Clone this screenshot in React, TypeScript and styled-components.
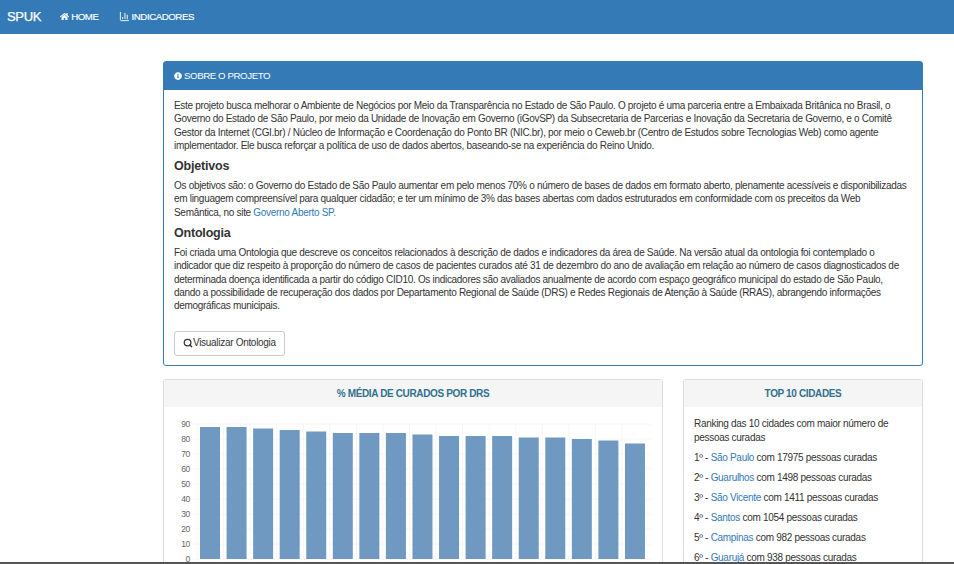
import React from 'react';
import styled, { createGlobalStyle } from 'styled-components';
import { BarChart3, Search } from 'lucide-react';
import { FaHome, FaInfoCircle } from 'react-icons/fa';

const GlobalStyle = createGlobalStyle`
  html, body {
    margin: 0;
    height: 564px;
    overflow: hidden;
    background: #fff;
    font-family: "Liberation Sans", Arial, sans-serif;
    font-size: 10px;
    letter-spacing: -0.3px;
    line-height: 13.3px;
    color: #333;
  }
  a { color: #337ab7; text-decoration: none; }
`;

const Navbar = styled.nav`
  height: 34px;
  background: #337ab7;
  display: flex;
  align-items: center;
  padding-left: 7px;
  color: #fff;
`;

const Brand = styled.div`
  font-size: 13px;
  letter-spacing: -0.3px;
  -webkit-text-stroke: 0.25px #fff;
  margin-right: 19px;
`;

const NavLink = styled.div`
  display: flex;
  align-items: center;
  gap: 2px;
  font-size: 9.7px;
  letter-spacing: -0.44px;
  -webkit-text-stroke: 0.15px #fff;
  margin-right: 20px;
`;

const Main = styled.main`
  padding: 27px 31px 0 163px;
`;

const Panel = styled.section`
  border: 1px solid #337ab7;
  border-radius: 3px;
  height: 305px;
  box-sizing: border-box;
`;

const PanelHeading = styled.div`
  background: #337ab7;
  color: #fff;
  height: 28px;
  display: flex;
  align-items: center;
  gap: 2px;
  padding-left: 10px;
  font-size: 9.7px;
  letter-spacing: -0.42px;
`;

const PanelBody = styled.div`
  padding: 9px 13px 10px 10px;
`;

const Paragraph = styled.p`
  margin: 0;
`;

const Subtitle = styled.h3`
  margin: 7px 0 6px;
  font-size: 12.5px;
  line-height: 14px;
  font-weight: 700;
  letter-spacing: -0.2px;
`;

const Button = styled.button`
  display: flex;
  align-items: center;
  gap: 0;
  margin-top: 18px;
  height: 25px;
  padding: 0 8px;
  background: #fff;
  border: 1px solid #ccc;
  border-radius: 3px;
  color: #333;
  font: inherit;
  letter-spacing: inherit;
`;

const Row = styled.div`
  display: grid;
  grid-template-columns: 500px 240px;
  gap: 20px;
  margin-top: 13px;
`;

const Card = styled.section`
  border: 1px solid #ddd;
  border-radius: 3px;
  height: 300px;
  box-sizing: border-box;
`;

const CardHeading = styled.div`
  height: 27px;
  background: #f5f5f5;
  display: flex;
  align-items: center;
  justify-content: center;
  font-weight: 700;
  font-size: 10px;
  letter-spacing: -0.36px;
  color: #31708f;
`;

const ChartBody = styled.div`
  padding-top: 10px;
`;

const RankingBody = styled.div`
  padding: 10.4px 10px;
`;

const RankingItem = styled.p`
  margin: 0 0 6.7px;
`;

const BottomEdge = styled.div`
  position: fixed;
  left: 0;
  right: 0;
  bottom: 0;
  height: 2px;
  background: #555;
`;

const values = [88, 88, 87, 86, 85, 84, 84, 84, 83, 82, 82, 82, 81, 81, 80, 79, 77];
const ticks = [0, 10, 20, 30, 40, 50, 60, 70, 80, 90];
const ranking = [
  ['1º', 'São Paulo', 17975],
  ['2º', 'Guarulhos', 1498],
  ['3º', 'São Vicente', 1411],
  ['4º', 'Santos', 1054],
  ['5º', 'Campinas', 982],
  ['6º', 'Guarujá', 938],
];

const Chart: React.FC = () => {
  const y0 = 142;
  return (
    <svg width="498" height="160" style={{ display: 'block' }}>
      {ticks.map((t) => (
        <g key={t}>
          <line x1="29" x2="487" y1={y0 - t * 1.5} y2={y0 - t * 1.5} stroke="#f6f6f6" />
          <text x="26" y={y0 - t * 1.5 + 3} textAnchor="end" fontSize="8.5" fill="#666">{t}</text>
        </g>
      ))}
      {values.map((v, i) => (
        <line key={i} x1={33 + i * 26.56} x2={33 + i * 26.56} y1={y0 - 135} y2={y0 + 2} stroke="#f6f6f6" />
      ))}
      {values.map((v, i) => (
        <rect key={i} x={36 + i * 26.56} y={y0 - v * 1.5} width="20" height={v * 1.5} fill="#7099c2" />
      ))}
    </svg>
  );
};

const App: React.FC = () => (
  <>
    <GlobalStyle />
    <Navbar>
      <Brand>SPUK</Brand>
      <NavLink><FaHome size={9} />HOME</NavLink>
      <NavLink><BarChart3 size={11} />INDICADORES</NavLink>
    </Navbar>
    <Main>
      <Panel>
        <PanelHeading><FaInfoCircle size={8} />SOBRE O PROJETO</PanelHeading>
        <PanelBody>
          <Paragraph>
            Este projeto busca melhorar o Ambiente de Negócios por Meio da Transparência no Estado de São Paulo. O projeto é uma parceria entre a Embaixada Britânica no Brasil, o Governo do Estado de São Paulo, por meio da Unidade de Inovação em Governo (iGovSP) da Subsecretaria de Parcerias e Inovação da Secretaria de Governo, e o Comitê Gestor da Internet (CGI.br) / Núcleo de Informação e Coordenação do Ponto BR (NIC.br), por meio o Ceweb.br (Centro de Estudos sobre Tecnologias Web) como agente implementador. Ele busca reforçar a política de uso de dados abertos, baseando-se na experiência do Reino Unido.
          </Paragraph>
          <Subtitle>Objetivos</Subtitle>
          <Paragraph>
            Os objetivos são: o Governo do Estado de São Paulo aumentar em pelo menos 70% o número de bases de dados em formato aberto, plenamente acessíveis e disponibilizadas em linguagem compreensível para qualquer cidadão; e ter um mínimo de 3% das bases abertas com dados estruturados em conformidade com os preceitos da Web Semântica, no site <a href="#">Governo Aberto SP.</a>
          </Paragraph>
          <Subtitle>Ontologia</Subtitle>
          <Paragraph>
            Foi criada uma Ontologia que descreve os conceitos relacionados à descrição de dados e indicadores da área de Saúde. Na versão atual da ontologia foi contemplado o indicador que diz respeito à proporção do número de casos de pacientes curados até 31 de dezembro do ano de avaliação em relação ao número de casos diagnosticados de determinada doença identificada a partir do código CID10. Os indicadores são avaliados anualmente de acordo com espaço geográfico municipal do estado de São Paulo, dando a possibilidade de recuperação dos dados por Departamento Regional de Saúde (DRS) e Redes Regionais de Atenção à Saúde (RRAS), abrangendo informações demográficas municipais.
          </Paragraph>
          <Button><Search size={10} strokeWidth={3} />Visualizar Ontologia</Button>
        </PanelBody>
      </Panel>
      <Row>
        <Card>
          <CardHeading>% MÉDIA DE CURADOS POR DRS</CardHeading>
          <ChartBody><Chart /></ChartBody>
        </Card>
        <Card>
          <CardHeading>TOP 10 CIDADES</CardHeading>
          <RankingBody>
            <RankingItem>Ranking das 10 cidades com maior número de pessoas curadas</RankingItem>
            {ranking.map(([pos, city, total]) => (
              <RankingItem key={city}>{pos} - <a href="#">{city}</a> com {total} pessoas curadas</RankingItem>
            ))}
          </RankingBody>
        </Card>
      </Row>
    </Main>
    <BottomEdge />
  </>
);

export default App;
